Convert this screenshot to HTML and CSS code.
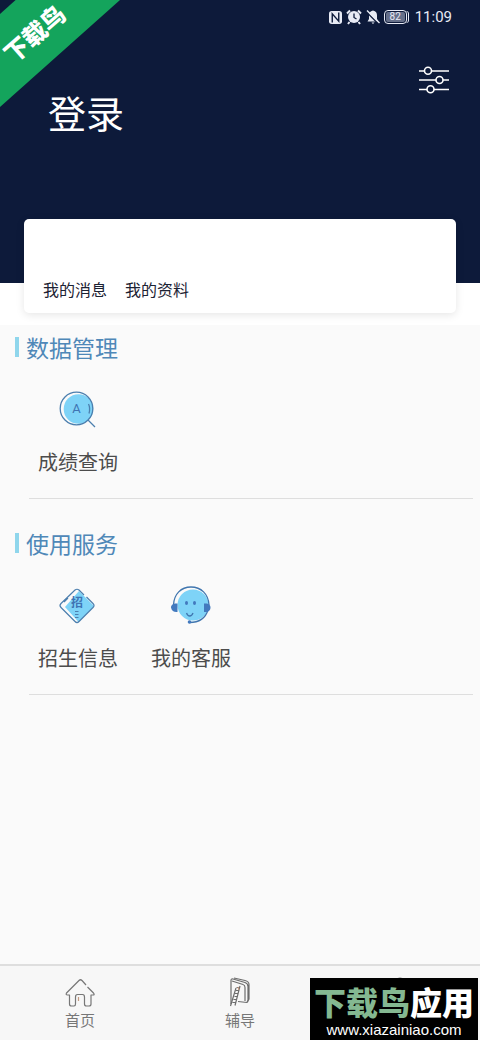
FILE: index.html
```html
<!DOCTYPE html>
<html lang="zh-CN">
<head>
<meta charset="utf-8">
<meta name="viewport" content="width=device-width, initial-scale=1">
<title>登录</title>
<link rel="stylesheet" href="styles.css">
</head>
<body>
<div class="app">
  <header class="hero">
    <div class="status">
      <svg width="13" height="13" viewBox="0 0 14 14"><rect x="0" y="0" width="14" height="14" rx="3" fill="#e8ebf5"/><path d="M3.500 12.500V3L10.500 11V1.500" fill="none" stroke="#0d1a3a" stroke-width="1.500"/></svg>
      <svg width="16" height="16" viewBox="0 0 16 16"><circle cx="8" cy="8" r="6" fill="#e8ebf5"/><path d="M1 4.500 4 1.500M15 4.500 12 1.500M3.500 13 2 15M12.500 13 14 15" stroke="#e8ebf5" stroke-width="2"/><path d="M8 4.500V8.500l2.500 1.500" fill="none" stroke="#0d1a3a" stroke-width="1.300"/></svg>
      <svg width="14" height="16" viewBox="0 0 14 16"><path d="M7 1.500c-3 .5-4 2.500-4 5V10l-1.500 2.500h11L11 10V6.500c0-2.500-1-4.500-4-5zM5.500 13.500h3L7 15z" fill="#e8ebf5"/><path d="M0 2.500 12 14.500" stroke="#0d1a3a" stroke-width="1.500"/><path d="M1 1.500 13.500 14" stroke="#e8ebf5" stroke-width="1.400"/></svg>
      <span class="battery"><span class="charge">82</span></span>
      <time class="clock">11:09</time>
    </div>
    <div class="hero-main">
      <h1 class="title">登录</h1>
      <button class="filter" type="button" aria-label="设置">
        <svg width="32" height="28" viewBox="0 0 32 28" fill="none" stroke="#fff" stroke-width="1.600"><path d="M1 5h5.500M13.500 5H31M1 14h17M25 14h6M1 23.500h8M16 23.500h15"/><circle cx="10" cy="4.800" r="3.500"/><circle cx="21.500" cy="14" r="3.500"/><circle cx="12.500" cy="23.300" r="3.500"/></svg>
      </button>
    </div>
    <div class="ribbon"><span class="ribbon-text">下载鸟</span></div>
  </header>

  <div class="profile">
    <nav class="card">
      <a class="card-link" href="#messages">我的消息</a>
      <a class="card-link" href="#info">我的资料</a>
    </nav>
  </div>

  <main class="content">
    <section class="section">
      <h2 class="heading">数据管理</h2>
      <div class="tiles">
        <button class="tile" type="button">
          <svg width="40" height="40" viewBox="0 0 40 40" fill="none" stroke="#4c7fae" stroke-width="1.300"><circle cx="20.500" cy="19" r="14.800" fill="#7ed3f7" stroke="none"/><circle cx="18.500" cy="18.500" r="16.300"/><path d="m30 30 7 7M30.500 14c1.500 3 1.500 6 .5 9.500"/><text class="icon-letter" x="18.500" y="23">A</text></svg>
          <span>成绩查询</span>
        </button>
      </div>
    </section>
    <section class="section">
      <h2 class="heading">使用服务</h2>
      <div class="tiles">
        <button class="tile" type="button">
          <svg width="40" height="40" viewBox="0 0 40 40" fill="none" stroke="#4c7fae" stroke-width="1.200"><path d="M21 5 36 20 20.500 36 7 21z" fill="#7ed3f7" stroke="none"/><path d="m26 9-5-5q-2-1.500-4 0L3 17.500q-2 2 0 4L17 35.500q2 2 4 0L35 21.500q2-2 0-4L28.500 11M6 16l4-4"/><text class="icon-word" x="19" y="21">招</text><path d="M17 25.500h3.500M17 28.500h3.500M17 31.500h3.500"/></svg>
          <span>招生信息</span>
        </button>
        <button class="tile" type="button">
          <svg width="40" height="40" viewBox="0 0 40 40" fill="none" stroke="#4076af" stroke-width="1.300"><circle cx="22" cy="19" r="15.500" fill="#7ed3f7" stroke="none"/><path d="M2.500 19C3 8 10 1 20 1s17.500 7 18 18M37 24C34.500 32 28 36.500 18.500 36.500"/><g fill="#4279be" stroke="none"><path d="M6.500 17.500v8.500c-3 .5-6-1-6.500-4.500 0-3 3-4.500 6.500-4zM33 17.500v8.500c3.500.5 6.500-1 6.500-4.500S36.500 17 33 17.500z"/><ellipse cx="15.500" cy="17" rx="1.500" ry="2"/><ellipse cx="23.500" cy="17" rx="1.500" ry="2"/><circle cx="18.500" cy="36" r="1.800"/></g><path d="M15.500 27c1.500 4 5 4 6.500 0"/></svg>
          <span>我的客服</span>
        </button>
      </div>
    </section>
  </main>

  <nav class="tabs">
    <button class="tab" type="button">
      <svg width="32" height="32" viewBox="0 0 32 32" fill="none" stroke="#777" stroke-width="1.200" stroke-linejoin="round"><path d="m22 9-4-4.500q-1.500-1.500-3 0L2.500 17q-1 2 1 2h2v9q0 2 2 2H10q1.500 0 1.500-2v-7q0-2.500 2-2.500h5q2 0 2 2.500v7q0 2 2 2h2.500q2 0 2-2v-9h2q2 0 .5-2L23.500 11"/><path d="M14.500 21v4" stroke="#c49a80"/></svg>
      <span>首页</span>
    </button>
    <button class="tab" type="button">
      <svg width="32" height="32" viewBox="0 0 32 32" fill="none" stroke="#6d6d6d" stroke-width="1.200" stroke-linejoin="round"><path d="M7 28V4.500q0-2 2-1.500l12 3.500q3 1 3 4V24l-1 2.500-9-1M8 5l11 3.500q2 .5 2 3V25M10 2l11 2.500q4 1 4 4V23l-1.500 3"/><path d="m12 12-5.500 18M16 10l-5 19.500M12.500 11.500h3M12 14.500h3M11 17.500h3M10.500 20.500h3M9.500 23.500h3M8.500 26.500h3"/><path d="m14 11 1 3" stroke="#c49a80"/></svg>
      <span>辅导</span>
    </button>
    <button class="tab" type="button" aria-label="我的">
      <svg width="32" height="32" viewBox="0 0 32 32" fill="none" stroke="#777" stroke-width="1.200"><circle cx="16" cy="8" r="6"/><path d="M4 30c0-16 24-16 24 0z"/></svg>
    </button>
  </nav>
</div>
<aside class="badge">
  <p class="badge-name"><span class="badge-green">下载鸟</span>应用</p>
  <p class="badge-url">www.xiazainiao.com</p>
</aside>
</body>
</html>
```
FILE: styles.css
```css
* { box-sizing: border-box; }
body {
  margin: 0;
  background: #fafafa;
  font-family: "Noto Sans CJK SC", sans-serif;
  color: #4c4c4c;
}
h1, h2, p { margin: 0; font-weight: 400; }
svg { display: block; flex: none; }
button {
  padding: 0;
  border: 0;
  background: none;
  font: inherit;
  color: inherit;
}
.app { display: flex; flex-direction: column; min-height: 100vh; }
.hero {
  position: relative;
  height: 283px;
  overflow: hidden;
  background: #0d1a3a;
  color: #fff;
}
.status {
  display: flex;
  align-items: center;
  justify-content: flex-end;
  gap: 4px;
  height: 34px;
  padding-right: 28px;
  color: #e8ebf5;
}
.battery {
  display: flex;
  width: 23px;
  height: 14px;
  padding: 1px;
  border: 1px solid #e8ebf5;
  border-radius: 4px;
  box-shadow: 2px 0 0 -1px #0d1a3a, 3px 0 0 -1px #e8ebf5;
}
.charge {
  flex: 1;
  border-radius: 2px;
  background: #66708a;
  font: 10px/10px Roboto, sans-serif;
  text-align: center;
}
.clock { padding-left: 4px; font: 15px/20px Roboto, sans-serif; }
.hero-main {
  display: flex;
  justify-content: space-between;
  align-items: flex-start;
  padding: 32px 30px 0 48px;
}
.title { padding-top: 19px; font-size: 38px; line-height: 54px; }
.ribbon {
  position: absolute;
  top: 0;
  left: 0;
  width: 120px;
  height: 107px;
  background: #14a45c;
  clip-path: polygon(13% 0, 100% 0, 0 100%, 0 13%);
}
.ribbon-text {
  position: absolute;
  top: 16px;
  left: -3px;
  width: 74px;
  font-size: 24px;
  font-weight: 900;
  line-height: 34px;
  text-align: center;
  transform: rotate(-41deg);
}
.profile {
  padding: 0 24px 12px;
  background: #fff;
}
.card {
  position: relative;
  display: flex;
  align-items: flex-end;
  gap: 18px;
  height: 94px;
  margin-top: -64px;
  padding: 0 19px 12px;
  border-radius: 5px;
  background: #fff;
  box-shadow: 0 2px 8px rgba(0, 0, 0, .1);
}
.card-link {
  font-size: 16px;
  line-height: 24px;
  color: #1c2233;
  text-decoration: none;
}
.content { flex: 1; }
.section { height: 196px; }
.heading {
  display: flex;
  align-items: center;
  gap: 7px;
  padding-left: 15px;
  font-size: 23px;
  line-height: 44px;
  color: #4f88b8;
}
.heading::before {
  content: "";
  width: 4px;
  height: 20px;
  background: #8fd6ec;
}
.tiles {
  display: flex;
  gap: 33px;
  margin: 0 7px 0 29px;
  padding: 21px 0 21px 9px;
  border-bottom: 1px solid #dedede;
}
.tile {
  display: flex;
  flex-direction: column;
  align-items: center;
  gap: 17px;
  width: 80px;
  font-size: 20px;
  line-height: 30px;
}
.icon-letter,
.icon-word {
  fill: #3f74b3;
  stroke: none;
  text-anchor: middle;
}
.icon-letter { font: 13px Roboto, sans-serif; }
.icon-word { font-size: 12px; font-weight: 700; }
.tabs {
  display: flex;
  height: 76px;
  border-top: 2px solid #dedede;
  background: #f7f7f7;
}
.tab {
  flex: 1;
  display: flex;
  flex-direction: column;
  align-items: center;
  padding-top: 10px;
  font-size: 15px;
  line-height: 24px;
  color: #777;
}
.badge {
  position: fixed;
  right: 2px;
  bottom: 0;
  width: 168px;
  height: 62px;
  padding-top: 4px;
  background: #000;
  color: #fff;
  text-align: center;
}
.badge-name { font-size: 32px; font-weight: 900; line-height: 38px; }
.badge-green { color: #84b891; }
.badge-url { font: 15px/20px "Liberation Sans", sans-serif; }
```
